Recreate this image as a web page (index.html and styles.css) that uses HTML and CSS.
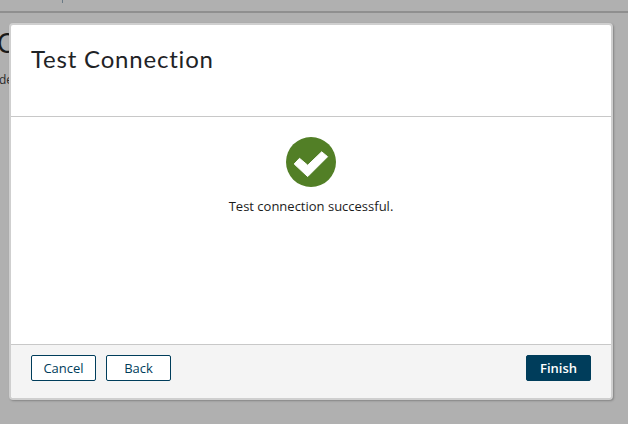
FILE: index.html
```html
<!DOCTYPE html>
<html lang="en">
<head>
<meta charset="utf-8">
<title>Test Connection</title>
<link rel="stylesheet" href="styles.css">
</head>
<body>
<div class="page">
  <div class="topbar"><span class="topbar-tick"></span></div>
  <div class="page-content">
    <div class="page-title">C</div>
    <div class="page-sub">de</div>
  </div>
</div>
<div class="modal">
  <header class="modal-header"><h1 class="modal-title">Test Connection</h1></header>
  <main class="modal-body">
    <svg class="status-icon" viewBox="0 0 50 50" width="50" height="50" aria-hidden="true">
      <circle cx="25" cy="25" r="25" fill="#527f26"/>
      <path d="M13.500 21.300 L8.200 27 L21.700 39.600 L41.600 19.700 L35.700 14.800 L21.700 28.200 Z" fill="#fff" stroke="#fff" stroke-width="1" stroke-linejoin="round"/>
    </svg>
    <p class="status-text">Test connection successful.</p>
  </main>
  <footer class="modal-footer">
    <button class="btn btn-outline">Cancel</button>
    <button class="btn btn-outline">Back</button>
    <button class="btn btn-primary">Finish</button>
  </footer>
</div>
</body>
</html>
```
FILE: styles.css
```css
html, body { margin: 0; height: 100%; }
body {
  width: 628px;
  height: 424px;
  overflow: hidden;
  background: #b0b0b0;
  font-family: "Open Sans", sans-serif;
  color: #222;
  position: relative;
}
.topbar {
  height: 11px;
  border-bottom: 2px solid #8f8f8f;
  position: relative;
}
.topbar-tick {
  position: absolute;
  left: 62px;
  top: 0;
  width: 1px;
  height: 3px;
  background: #6a7a86;
}
.page-content { padding: 15px 0 0 0; }
.page-title {
  font-family: Lato, sans-serif;
  font-size: 26px;
  line-height: 30px;
  color: #1a1a1a;
  margin-left: -3px;
}
.page-sub {
  font-size: 12px;
  line-height: 16px;
  margin-top: 14px;
  margin-left: -1px;
  color: #2a2a2a;
}
.modal {
  position: absolute;
  left: 9px;
  top: 23px;
  width: 600px;
  height: 373px;
  display: flex;
  flex-direction: column;
  background: #fff;
  border: 2px solid #cfcfcf;
  border-radius: 4px;
  box-shadow: 1px 1px 2px rgba(0, 0, 0, 0.25);
}
.modal-header {
  height: 92px;
  padding: 19px 20px 0;
  box-sizing: border-box;
  border-bottom: 1px solid #c8c8c8;
}
.modal-title {
  margin: 0;
  font-family: Lato, sans-serif;
  font-weight: 400;
  font-size: 24px;
  line-height: 29px;
  letter-spacing: 0.8px;
  color: #1f2326;
}
.modal-body {
  flex: 1;
  display: flex;
  flex-direction: column;
  align-items: center;
  padding-top: 20px;
}
.status-icon { display: block; }
.status-text {
  margin: 11px 0 0;
  font-size: 13px;
  line-height: 16px;
  color: #1c1c1c;
}
.modal-footer {
  height: 54px;
  box-sizing: border-box;
  display: flex;
  align-items: flex-start;
  gap: 10px;
  padding: 10px 20px 0;
  background: #f4f4f4;
  border-top: 1px solid #c8c8c8;
  border-radius: 0 0 3px 3px;
}
.btn {
  width: 65px;
  height: 26px;
  padding: 0;
  box-sizing: border-box;
  border: 1px solid #003d5b;
  border-radius: 2px;
  font-family: "Open Sans", sans-serif;
  font-size: 13px;
  line-height: 24px;
}
.btn-outline { background: #fff; color: #003d5b; }
.btn-primary {
  margin-left: auto;
  background: #003d5b;
  color: #fff;
  font-weight: 600;
}
```
